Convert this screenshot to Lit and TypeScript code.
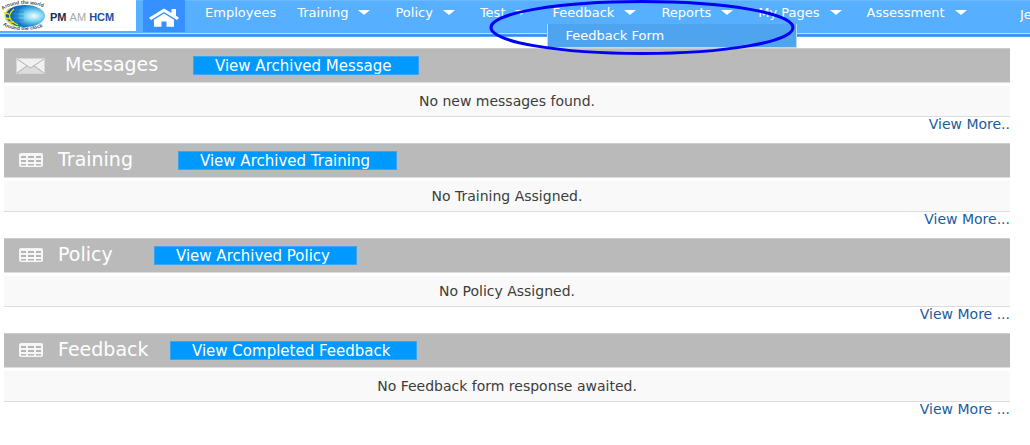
import { LitElement, html, css, svg, nothing } from "lit";
import { customElement, property } from "lit/decorators.js";

interface NavItem {
  label: string;
  menu?: boolean;
  children?: string[];
}

interface Panel {
  title: string;
  icon: "mail" | "grid";
  titleWidth: number;
  action: string;
  empty: string;
  more: string;
}

const NAV: NavItem[] = [
  { label: "Employees" },
  { label: "Training", menu: true },
  { label: "Policy", menu: true },
  { label: "Test", menu: true },
  { label: "Feedback", menu: true, children: ["Feedback Form"] },
  { label: "Reports", menu: true },
  { label: "My Pages", menu: true },
  { label: "Assessment", menu: true },
];

const PANELS: Panel[] = [
  { title: "Messages", icon: "mail", titleWidth: 128, action: "View Archived Message", empty: "No new messages found.", more: "View More.." },
  { title: "Training", icon: "grid", titleWidth: 120, action: "View Archived Training", empty: "No Training Assigned.", more: "View More..." },
  { title: "Policy", icon: "grid", titleWidth: 96, action: "View Archived Policy", empty: "No Policy Assigned.", more: "View More ..." },
  { title: "Feedback", icon: "grid", titleWidth: 112, action: "View Completed Feedback", empty: "No Feedback form response awaited.", more: "View More ..." },
];

@customElement("brand-logo")
export class BrandLogo extends LitElement {
  static styles = css`
    :host { display: flex; align-items: center; flex: none; width: 136px; height: 31px; background: #fff; }
    .globe { width: 48px; height: 31px; flex: none; }
    .ring { font: bold 5px "Liberation Sans", Arial, sans-serif; fill: #4a4a4a; }
    .name { margin: 2px 0 0 2px; font: bold 11px "Liberation Sans", Arial, sans-serif; color: #1c2b52; white-space: nowrap; }
    .am { color: #a8a8a8; font-weight: normal; }
    .hcm { color: #1d4fa0; }
  `;
  render() {
    return html`
      <svg class="globe" viewBox="0 0 48 31" aria-hidden="true">
        <defs>
          <radialGradient id="sea" cx="0.72" cy="0.5" r="0.75">
            <stop offset="0" stop-color="#f2fdff" />
            <stop offset="0.3" stop-color="#7fd6f3" />
            <stop offset="0.65" stop-color="#1583cf" />
            <stop offset="1" stop-color="#0b3f93" />
          </radialGradient>
          <path id="top" d="M3 10 C11 2.500 34 2 47 9" />
          <path id="bottom" d="M3 25 C11 31.500 34 32 47 25" />
        </defs>
        <ellipse cx="25" cy="16" rx="20" ry="11" fill="url(#sea)" />
        <g fill="none" stroke="#124f9b" stroke-width="0.6" opacity="0.6">
          <path d="M15 8 Q7 16 15 24 M21 6 Q13 16 21 26" />
          <path d="M8 12 H24 M6 16 H24 M8 20 H24" />
        </g>
        <g fill="none" stroke="#e6de1c" stroke-width="1.3">
          <path d="M10 8 Q3 14 6 18 Q8 23 15 26" />
          <path d="M14 9 Q7 15 11 20 Q13 23 18 25" />
          <path d="M4 13 L9 14 M5 18 L11 19 M9 22 L14 22" />
        </g>
        <text class="ring"><textPath href="#top">Around the world</textPath></text>
        <text class="ring"><textPath href="#bottom">Around the clock</textPath></text>
      </svg>
      <span class="name">PM <span class="am">AM</span> <span class="hcm">HCM</span></span>
    `;
  }
}

@customElement("nav-bar")
export class NavBar extends LitElement {
  static styles = css`
    :host { display: block; font: 13px/16px "DejaVu Sans", Verdana, sans-serif; }
    .bar {
      display: flex; align-items: flex-start; height: 33px;
      background: #57afff; box-shadow: inset 0 1px #6cb9ff;
      border-bottom: 1px solid #b5dbff;
    }
    .edge { height: 3px; background: linear-gradient(#4f9ffb, #2c86f5 60%, #7cb8fa); }
    .home {
      display: flex; align-items: center; justify-content: center; flex: none;
      width: 42px; height: 32px; margin-left: 7px; background: #3690ff;
    }
    .home svg { width: 32px; height: 20px; margin-top: 3px; }
    .items { display: flex; flex: 1; min-width: 0; margin: 0; padding: 5px 0 0 20px; gap: 26px; list-style: none; }
    .item { position: relative; flex: none; }
    .plain { margin-right: -5px; }
    .link { display: flex; align-items: center; gap: 10px; color: #fff; text-decoration: none; white-space: nowrap; }
    .items > .item { margin-left: 0; }
    .caret { width: 12px; height: 5px; margin: 0 -1px 2px 0; }
    .drop {
      position: absolute; top: 19px; left: -5px; box-sizing: border-box; width: 250px;
      margin: 0; padding: 4px 17px 3px; list-style: none;
      background: #4fa4f0; border: 1px solid #b5dbff; border-top: 0;
    }
    .user { flex: none; width: 10px; overflow: hidden; padding-top: 7px; color: #fff; white-space: nowrap; text-decoration: none; }
  `;
  render() {
    return html`
      <nav class="bar">
        <brand-logo></brand-logo>
        <a class="home" href="#" aria-label="Home">
          <svg viewBox="0 0 32 20" fill="#fff" aria-hidden="true">
            <path d="M16 0.5 L1 9.8 L3 12 L16 4 L29 12 L31 9.8 L28 7.8 V1 H23.5 V5.1z" />
            <path d="M16 5.5 L6 11.7 V18.8 H13.5 V13.5 H18.5 V18.8 H26 V11.7z" />
          </svg>
        </a>
        <ul class="items">
          ${NAV.map((item) => html`
            <li class="item ${item.menu ? "" : "plain"}">
              <a class="link" href="#">
                ${item.label}
                ${item.menu ? html`<svg class="caret" viewBox="0 0 12 5" aria-hidden="true"><path d="M0 0H12L6 5z" fill="#fff" /></svg>` : nothing}
              </a>
              ${item.children ? html`<ul class="drop">${item.children.map((c) => html`<li><a class="link" href="#">${c}</a></li>`)}</ul>` : nothing}
            </li>`)}
        </ul>
        <a class="user" href="#">Je</a>
      </nav>
      <div class="edge"></div>
    `;
  }
}

const mailIcon = svg`
  <rect x="0.5" y="0.5" width="28" height="15" fill="#f1f1f1" stroke="#d6d6d6" />
  <path d="M1 15 L11 7.5 L14.5 10 L18 7.5 L28 15z" fill="#dcdcdc" />
  <path d="M1 1 L14.5 10 L28 1 M1 15 L11 7.8 M28 15 L18 7.8" fill="none" stroke="#b0b0b0" />`;

const gridIcon = svg`
  <rect x="3" y="0" width="24" height="14" rx="2" fill="#f6f6f6" />
  <path d="M5 3h5v2H5z M12 3h6v2h-6z M20 3h5v2h-5z M5 7h5v2H5z M12 7h6v2h-6z M20 7h5v2h-5z M5 11h5v1.500H5z M12 11h6v1.500h-6z M20 11h5v1.500h-5z" fill="#b4b4b4" />`;

@customElement("info-panel")
export class InfoPanel extends LitElement {
  @property({ attribute: false }) panel!: Panel;

  static styles = css`
    :host { display: block; font: 14px/20px "DejaVu Sans", Verdana, sans-serif; }
    .head {
      display: flex; align-items: center; box-sizing: border-box; height: 35px; padding-left: 12px;
      background: #bababa; border-top: 1px solid #cdcdcd; border-bottom: 1px solid #dedede;
    }
    .icon { flex: none; width: 30px; height: 16px; }
    .title { flex: none; margin: 0 0 3px 12px; color: #fff; font-size: 19px; font-weight: normal; white-space: nowrap; }
    .mail { margin-left: 19px; }
    .action {
      height: 19px; padding: 0 26px 0 21px; border: 1px solid #3ba5f5; background: #0099ff;
      color: #fff; font: 15px/16px "DejaVu Sans", Verdana, sans-serif; white-space: nowrap;
    }
    .empty {
      box-sizing: border-box; height: 31px; margin: 3px 0 0; padding-top: 5px;
      background: #f9f9f9; border-bottom: 1px solid #dcdcdc; color: #3c3c3c; text-align: center;
    }
    .foot { display: flex; justify-content: flex-end; height: 14px; }
    .more { color: #205b9e; line-height: 14px; text-decoration: none; white-space: pre; }
  `;
  render() {
    const p = this.panel;
    return html`
      <div class="head">
        <svg class="icon" viewBox="0 0 30 16" aria-hidden="true">${p.icon === "mail" ? mailIcon : gridIcon}</svg>
        <h2 class="title ${p.icon}" style="width:${p.titleWidth}px">${p.title}</h2>
        <button class="action" type="button">${p.action}</button>
      </div>
      <p class="empty">${p.empty}</p>
      <div class="foot"><a class="more" href="#">${p.more}</a></div>
    `;
  }
}

@customElement("app-root")
export class AppRoot extends LitElement {
  static styles = css`
    :host { display: block; position: relative; min-height: 100vh; overflow: hidden; background: #fff; }
    .panels { display: grid; gap: 12px; padding: 11px 20px 16px 4px; }
    .marker { position: absolute; top: 0; left: 488px; width: 308px; height: 56px; pointer-events: none; }
  `;
  render() {
    return html`
      <nav-bar></nav-bar>
      <main class="panels">${PANELS.map((p) => html`<info-panel .panel=${p}></info-panel>`)}</main>
      <svg class="marker" viewBox="0 0 308 56" aria-hidden="true">
        <ellipse cx="154" cy="27.500" rx="151" ry="26" fill="none" stroke="#0000f5" stroke-width="3" />
      </svg>
    `;
  }
}
